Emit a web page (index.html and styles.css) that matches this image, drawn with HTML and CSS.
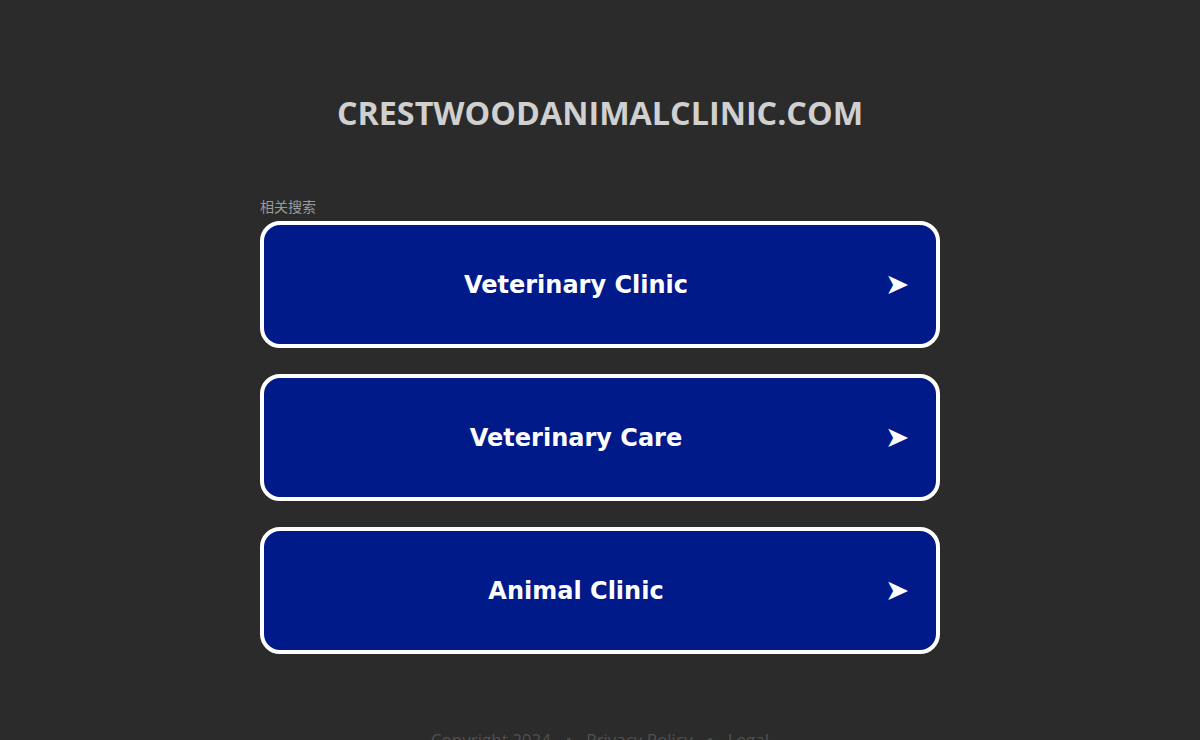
FILE: index.html
```html
<!DOCTYPE html>
<html lang="zh">
<head>
<meta charset="utf-8">
<title>crestwoodanimalclinic.com</title>
<link rel="stylesheet" href="styles.css">
</head>
<body>
<div class="page">
  <h1 class="domain">CRESTWOODANIMALCLINIC.COM</h1>
  <div class="related">
    <div class="related-label">相关搜索</div>
    <ul class="links">
      <li><a class="link" href="#"><span class="link-text">Veterinary Clinic</span><span class="link-arrow">➤</span></a></li>
      <li><a class="link" href="#"><span class="link-text">Veterinary Care</span><span class="link-arrow">➤</span></a></li>
      <li><a class="link" href="#"><span class="link-text">Animal Clinic</span><span class="link-arrow">➤</span></a></li>
    </ul>
  </div>
  <div class="footer">Copyright 2024 <span class="dot">•</span> Privacy Policy <span class="dot">•</span> Legal</div>
</div>
</body>
</html>
```
FILE: styles.css
```css
html, body {
  margin: 0;
  padding: 0;
  background: #2b2b2b;
  height: 100%;
  overflow: hidden;
}
.page {
  display: flex;
  flex-direction: column;
  align-items: center;
  padding-top: 92px;
}
.domain {
  margin: 0;
  font-family: "Open Sans", sans-serif;
  font-weight: 700;
  font-size: 32.3px;
  line-height: 40px;
  color: #d0d0d0;
}
.related {
  width: 680px;
  margin-top: 66px;
}
.related-label {
  font-family: "Noto Sans CJK SC", sans-serif;
  font-size: 14px;
  line-height: 16px;
  color: #9a9a9a;
  margin-bottom: 7px;
}
.links {
  list-style: none;
  margin: 0;
  padding: 0;
  display: flex;
  flex-direction: column;
  gap: 26px;
}
.link {
  display: flex;
  align-items: center;
  height: 119px;
  border: 4px solid #ffffff;
  border-radius: 20px;
  background: #011a8a;
  text-decoration: none;
  color: #ffffff;
  padding: 0 31px 0 3px;
}
.link-text {
  flex: 1;
  text-align: center;
  font-family: "DejaVu Sans", Verdana, sans-serif;
  font-weight: 700;
  font-size: 24px;
}
.link-arrow {
  width: 20px;
  font-family: "DejaVu Sans", sans-serif;
  font-size: 29px;
  line-height: 1;
  text-align: center;
}
.footer {
  margin-top: 74px;
  font-family: "Open Sans", sans-serif;
  font-size: 17px;
  color: #505050;
}
.dot {
  margin: 0 10px;
}
```
